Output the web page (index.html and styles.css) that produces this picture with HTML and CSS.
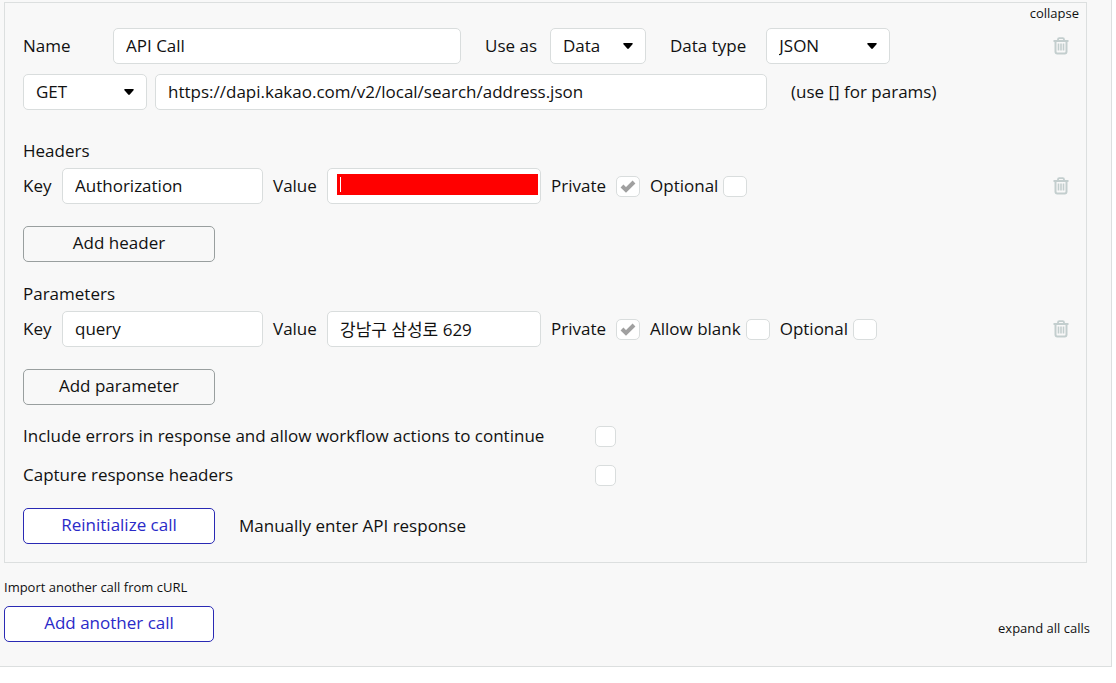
FILE: index.html
```
<!DOCTYPE html>
<html lang="en">
 <head>
  <title>API Connector</title>
  <meta charset="UTF-8">
  <meta name="viewport" content="width=device-width, initial-scale=1">
  <link rel="stylesheet" href="styles.css">
 </head>

 <body>
	<svg class="defs" width="0" height="0">
		<symbol id="trash" viewBox="0 0 16 18">
			<path d="M5 3.500V2.500Q5 1.200 6.300 1.200H9.700Q11 1.200 11 2.500V3.500M0.500 4H15.500" fill="none" stroke="#c3cece" stroke-width="1.800"/>
			<path d="M2.500 4V14.500Q2.500 16.500 4.300 16.500H11.700Q13.500 16.500 13.500 14.500V4" fill="none" stroke="#c3cece" stroke-width="2"/>
			<path d="M5.500 6.500V13.500M8 6.500V13.500M10.500 6.500V13.500" fill="none" stroke="#c3cece" stroke-width="1.600"/>
		</symbol>
	</svg>
	<main class="panel">
	<form class="call">
		<div class="call_top"><a href="#" class="small">collapse</a></div>

		<div class="row">
			<label class="name_label" for="F_Name">Name</label>
			<input type="text" class="field name" id="F_Name" value="API Call">
			<label class="after_field" for="F_UseAs">Use as</label>
			<select class="field use_as" id="F_UseAs"><option>Data</option><option>Action</option></select>
			<label class="after_field" for="F_DataType">Data type</label>
			<select class="field data_type" id="F_DataType"><option>JSON</option><option>XML</option></select>
			<button type="button" class="trash" aria-label="Delete call"><svg><use href="#trash"/></svg></button>
		</div>
		<div class="row url_row">
			<select class="field method" aria-label="Method"><option>GET</option><option>POST</option></select>
			<input type="text" class="field url" aria-label="URL" value="https://dapi.kakao.com/v2/local/search/address.json">
			<span class="after_field">(use [] for params)</span>
		</div>

		<h3 class="heading first">Headers</h3>
		<div class="row">
			<label class="key_label" for="F_HeaderKey">Key</label>
			<input type="text" class="field key" id="F_HeaderKey" value="Authorization">
			<label class="value_label" for="F_HeaderValue">Value</label>
			<div class="value secret">
				<input type="text" class="field" id="F_HeaderValue">
				<span class="mask"></span>
			</div>
			<label class="check private">Private<input type="checkbox" checked></label>
			<label class="check">Optional<input type="checkbox"></label>
			<button type="button" class="trash" aria-label="Delete header"><svg><use href="#trash"/></svg></button>
		</div>
		<button type="button" class="button add">Add header</button>

		<h3 class="heading">Parameters</h3>
		<div class="row">
			<label class="key_label" for="F_ParamKey">Key</label>
			<input type="text" class="field key" id="F_ParamKey" value="query">
			<label class="value_label" for="F_ParamValue">Value</label>
			<div class="value">
				<input type="text" class="field" id="F_ParamValue" value="강남구 삼성로 629">
			</div>
			<label class="check private">Private<input type="checkbox" checked></label>
			<label class="check">Allow blank<input type="checkbox"></label>
			<label class="check">Optional<input type="checkbox"></label>
			<button type="button" class="trash" aria-label="Delete parameter"><svg><use href="#trash"/></svg></button>
		</div>
		<button type="button" class="button add">Add parameter</button>

		<div class="options">
			<label class="option"><span>Include errors in response and allow workflow actions to continue</span><input type="checkbox"></label>
			<label class="option"><span>Capture response headers</span><input type="checkbox"></label>
		</div>

		<div class="row">
			<button type="button" class="button primary">Reinitialize call</button>
			<a href="#" class="after_field">Manually enter API response</a>
		</div>
	</form>

	<a href="#" class="small import">Import another call from cURL</a>
	<div class="footer">
		<button type="button" class="button primary another">Add another call</button>
		<a href="#" class="small">expand all calls</a>
	</div>
	</main>
 </body>
</html>
```
FILE: styles.css
```
*{
	box-sizing: border-box;
}
body{
	margin: 0;
	background: #fff;
}
body,input,select,button{
	font-family: "Open Sans", "Noto Sans CJK KR", sans-serif;
	font-size: 17px;
	line-height: 24px;
	color: #111;
}
a{
	color: inherit;
	text-decoration: none;
}
.defs{
	position: absolute;
}
.panel{
	margin-right: 4px;
	padding: 2px 24px 24px 4px;
	background: #f8f8f8;
	border: solid #dcdfdf;
	border-width: 0 1px 1px 0;
}
.call{
	padding: 0 18px 18px;
	border: solid 1px #dcdfdf;
}
.small{
	font-size: 13px;
	line-height: 20px;
}
.call_top{
	display: flex;
	justify-content: flex-end;
	margin: 0 -11px 5px 0;
}
.row{
	display: flex;
	align-items: center;
	white-space: nowrap;
}
.url_row{
	margin-top: 10px;
}
.field{
	height: 36px;
	min-width: 0;
	padding: 0 12px;
	background: #fff;
	border: solid 1px #d9dddd;
	border-radius: 5px;
}
input.field{
	padding-bottom: 1px;
}
select.field{
	appearance: none;
	background: #fff url("data:image/svg+xml,%3Csvg xmlns='http://www.w3.org/2000/svg' width='10' height='6'%3E%3Cpath d='M1 0H9Q10.500 0 9.500 1.200L5.800 5.500Q5 6.300 4.200 5.500L.5 1.200Q-.5 0 1 0Z'/%3E%3C/svg%3E") no-repeat right 12px center;
}
.name_label{
	width: 90px;
}
.name{
	flex: 0 1 348px;
}
.after_field{
	margin-left: 24px;
}
.use_as{
	width: 96px;
	margin-left: 13px;
}
.data_type{
	width: 124px;
	margin-left: 20px;
}
.method{
	width: 124px;
	margin-right: 8px;
}
.url{
	flex: 0 1 612px;
}
.trash{
	margin-left: auto;
	margin-right: -1px;
	padding: 0;
	background: none;
	border: 0;
}
.trash svg{
	display: block;
	width: 16px;
	height: 18px;
}
.heading{
	margin: 20px 0 5px;
	font-size: 17px;
	font-weight: normal;
}
.heading.first{
	margin-top: 29px;
}
.key_label{
	width: 39px;
}
.key{
	flex: 0 1 201px;
}
.value_label{
	width: 64px;
	padding-left: 10px;
}
.value{
	display: flex;
	flex: 0 1 214px;
	min-width: 0;
}
.value .field{
	flex: 1;
}
.secret{
	position: relative;
}
.mask{
	position: absolute;
	top: 6px;
	right: 3px;
	bottom: 9px;
	left: 10px;
	background: #f00;
}
.mask::before{
	content: "";
	position: absolute;
	top: 3px;
	bottom: 3px;
	left: 3px;
	width: 1px;
	background: #fff;
}
.check{
	display: flex;
	align-items: center;
	gap: 5px;
	margin-left: 10px;
}
.private{
	gap: 10px;
}
input[type=checkbox]{
	flex: none;
	appearance: none;
	width: 24px;
	height: 21px;
	margin: 0;
	background: #fff;
	border: solid 1px #d9dddd;
	border-radius: 5px;
}
input[type=checkbox]:checked{
	background: #fff url("data:image/svg+xml,%3Csvg xmlns='http://www.w3.org/2000/svg' width='16' height='14'%3E%3Cpath d='M2 7L6 11L14 3' fill='none' stroke='%23a0a0a0' stroke-width='4'/%3E%3C/svg%3E") no-repeat center;
}
.button{
	width: 192px;
	height: 36px;
	padding: 0 0 2px;
	background: #f8f8f8;
	border: solid 1px #999f9f;
	border-radius: 5px;
}
.add{
	display: block;
	margin-top: 22px;
}
.primary{
	color: #2a2ac8;
	background: #fff;
	border-color: #2a2ab4;
}
.options{
	display: grid;
	gap: 15px;
	margin: 19px 0 21px;
}
.option{
	display: flex;
	align-items: center;
}
.option span{
	flex: 0 1 572px;
}
.option input[type=checkbox]{
	width: 21px;
}
.import{
	display: block;
	margin: 14px 0 9px;
}
.footer{
	display: flex;
	align-items: center;
	justify-content: space-between;
	margin-right: -3px;
}
.another{
	width: 210px;
}
.footer .small{
	padding-top: 8px;
}
```
